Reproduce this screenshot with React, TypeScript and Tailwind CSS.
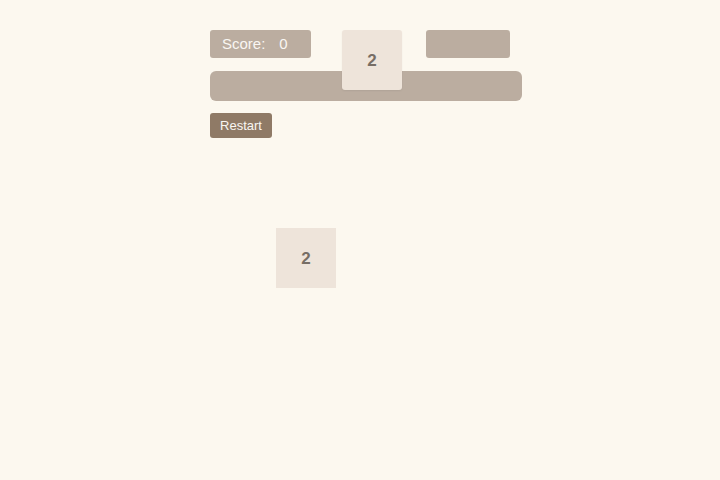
const Tile = ({ value, className }: { value: number; className: string }) => (
  <div
    className={`absolute flex h-[60px] w-[60px] items-center justify-center bg-[#eee4da] pt-[2px] text-[17px] font-bold text-[#776e65] ${className}`}
  >
    {value}
  </div>
);

export default function App() {
  return (
    <div className="min-h-[480px] w-full bg-[#fcf8ef] font-['Liberation_Sans',Arial,sans-serif]">
      <div className="relative ml-[210px] w-[312px] pt-[30px]">
        {/* Header row */}
        <div className="flex h-[28px] items-start">
          <div className="flex h-[28px] w-[101px] items-center gap-[14px] rounded-[3px] bg-[#bbada0] pl-[12px] text-[15px] text-[#f9f6f2]">
            <span>Score:</span>
            <span>0</span>
          </div>
          <div className="ml-[115px] h-[28px] w-[84px] rounded-[3px] bg-[#bbada0]" />
        </div>

        {/* Board strip */}
        <div className="mt-[13px] h-[30px] w-[312px] rounded-[6px] bg-[#bbada0]" />

        <button className="mt-[12px] flex h-[25px] w-[62px] items-center justify-center rounded-[3px] bg-[#8f7a66] text-[13px] text-[#f9f6f2]">
          Restart
        </button>

        <Tile value={2} className="left-[132px] top-[30px] rounded-[3px] shadow-[0_1px_2px_rgba(0,0,0,0.06)]" />
        <Tile value={2} className="left-[66px] top-[228px]" />
      </div>
    </div>
  );
}
